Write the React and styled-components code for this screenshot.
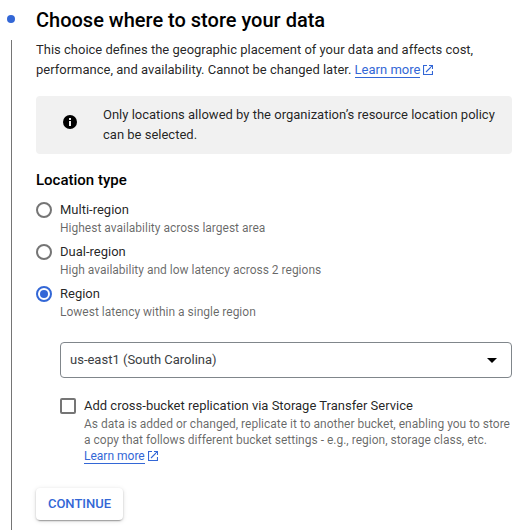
import React, { useState } from "react";
import styled, { createGlobalStyle } from "styled-components";

const GlobalStyle = createGlobalStyle`
  * { box-sizing: border-box; }
  body {
    margin: 0;
    background: #fff;
    color: rgba(0, 0, 0, 0.87);
    font: 400 13px/20px Roboto, Arial, sans-serif;
    overflow: hidden;
  }
`;

const Step = styled.section`
  display: grid;
  grid-template-columns: 36px 476px;
  height: 530px;
`;

const Rail = styled.div`
  display: flex;
  flex-direction: column;
  padding: 15px 0 0 7px;
`;

const Dot = styled.span`
  width: 8px;
  height: 8px;
  border-radius: 50%;
  background: #3367d6;
`;

const Line = styled.span`
  flex: 1;
  width: 1px;
  margin: 17px 0 0 4px;
  background: #757575;
`;

const Content = styled.div`
  display: flex;
  flex-direction: column;
  padding-top: 8px;
`;

const Title = styled.h2`
  margin: 0;
  font-size: 20px;
  font-weight: 500;
  line-height: 24px;
  color: #000;
`;

const Description = styled.p`
  margin: 8px 0 0;
`;

const Link = styled.a`
  display: inline-flex;
  align-items: center;
  gap: 3px;
  color: #3367d6;
  text-decoration: none;
  cursor: pointer;
  vertical-align: top;
  height: ${(p) => (p.$small ? 16 : 20)}px;
`;

const LinkText = styled.span`
  align-self: flex-start;
  height: ${(p) => (p.$small ? 16 : 18)}px;
  border-bottom: 1px solid #3367d6;
  line-height: ${(p) => (p.$small ? 16 : 20)}px;
`;

const Notice = styled.div`
  display: flex;
  align-items: center;
  gap: 26px;
  height: 58px;
  margin-top: 16px;
  padding: 0 12px 0 27px;
  border-radius: 4px;
  background: #f1f1f1;
`;

const NoticeIcon = styled.svg`
  flex: none;
  margin-bottom: 6px;
`;

const NoticeText = styled.p`
  margin: 0;
  padding-bottom: 1px;
`;

const SectionTitle = styled.h3`
  margin: 16px 0 0;
  font-size: 15px;
  font-weight: 500;
  line-height: 20px;
  color: #000;
`;

const Options = styled.div`
  display: flex;
  flex-direction: column;
  gap: 6px;
  margin-top: 10px;
`;

const Option = styled.div`
  display: grid;
  grid-template-columns: 16px 1fr;
  column-gap: 8px;
  cursor: pointer;
`;

const Radio = styled.span`
  display: grid;
  place-items: center;
  width: 16px;
  height: 16px;
  margin-top: 2px;
  border: 2px solid ${(p) => (p.$checked ? "#3367d6" : "#757575")};
  border-radius: 50%;

  &::after {
    content: "";
    width: 8px;
    height: 8px;
    border-radius: 50%;
    background: ${(p) => (p.$checked ? "#3367d6" : "transparent")};
  }
`;

const Checkbox = styled.span`
  width: 16px;
  height: 16px;
  margin-top: 2px;
  border: 2px solid #757575;
  border-radius: 2px;
`;

const Label = styled.div`
  line-height: 20px;
  color: rgba(0, 0, 0, 0.87);
`;

const Hint = styled.div`
  font-size: 12px;
  line-height: 16px;
  color: rgba(0, 0, 0, 0.6);
`;

const RegionDetails = styled.div`
  display: flex;
  flex-direction: column;
  gap: 18px;
  margin: 22px 0 0 24px;
`;

const Select = styled.div`
  display: flex;
  align-items: center;
  justify-content: space-between;
  height: 36px;
  padding: 0 14px 0 9px;
  border: 1px solid #80868b;
  border-radius: 4px;
  color: #3c4043;
  cursor: pointer;
`;

const Continue = styled.button`
  align-self: flex-start;
  width: 87px;
  height: 32px;
  margin-top: 24px;
  padding: 0;
  border: 0;
  border-radius: 4px;
  background: #fff;
  color: #3367d6;
  font: 500 13px/32px Roboto, Arial, sans-serif;
  box-shadow: 0 3px 1px -2px rgba(0, 0, 0, 0.2), 0 1px 2px rgba(0, 0, 0, 0.2),
    0 1px 5px rgba(0, 0, 0, 0.12);
`;

const OpenIcon = () => (
  <svg width="10" height="10" viewBox="0 0 10 10" fill="none" stroke="#3367d6" strokeWidth="1.15">
    <path d="M4 .5H.5v9h9V6M6 .5h3.5V4M9.4 .6L3 7" />
  </svg>
);

const InfoIcon = () => (
  <NoticeIcon width="14" height="14" viewBox="0 0 14 14">
    <circle cx="7" cy="7" r="7" fill="#000" />
    <path d="M6 3h2v2H6zM6 6h2v5H6z" fill="#f1f1f1" />
  </NoticeIcon>
);

const CaretIcon = () => (
  <svg width="10" height="5" viewBox="0 0 10 5">
    <path d="M0 0h10L5 5z" fill="#000" />
  </svg>
);

const LearnMore = ({ small }) => (
  <Link $small={small}>
    <LinkText $small={small}>Learn more</LinkText>
    <OpenIcon />
  </Link>
);

const locationTypes = [
  { name: "Multi-region", hint: "Highest availability across largest area" },
  { name: "Dual-region", hint: "High availability and low latency across 2 regions" },
  { name: "Region", hint: "Lowest latency within a single region" },
];

export default function App() {
  const [selected, setSelected] = useState("Region");
  return (
    <>
      <GlobalStyle />
      <Step>
        <Rail>
          <Dot />
          <Line />
        </Rail>
        <Content>
          <Title>Choose where to store your data</Title>
          <Description>
            This choice defines the geographic placement of your data and affects cost,
            <br />
            performance, and availability. Cannot be changed later. <LearnMore />
          </Description>
          <Notice>
            <InfoIcon />
            <NoticeText>
              Only locations allowed by the organization’s resource location policy
              <br />
              can be selected.
            </NoticeText>
          </Notice>
          <SectionTitle>Location type</SectionTitle>
          <Options role="radiogroup">
            {locationTypes.map(({ name, hint }) => (
              <Option key={name} onClick={() => setSelected(name)}>
                <Radio $checked={selected === name} />
                <div>
                  <Label>{name}</Label>
                  <Hint>{hint}</Hint>
                </div>
              </Option>
            ))}
          </Options>
          <RegionDetails>
            <Select>
              us-east1 (South Carolina)
              <CaretIcon />
            </Select>
            <Option>
              <Checkbox />
              <div>
                <Label>Add cross-bucket replication via Storage Transfer Service</Label>
                <Hint>
                  As data is added or changed, replicate it to another bucket, enabling you to store
                  <br />a copy that follows different bucket settings - e.g., region, storage class, etc.
                  <br />
                  <LearnMore small />
                </Hint>
              </div>
            </Option>
          </RegionDetails>
          <Continue>CONTINUE</Continue>
        </Content>
      </Step>
    </>
  );
}
